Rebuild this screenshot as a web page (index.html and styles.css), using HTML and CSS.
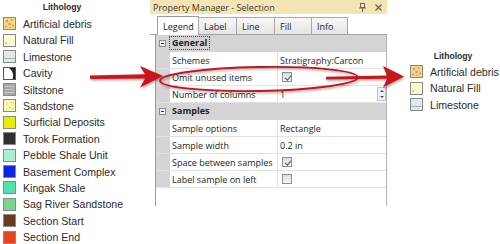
FILE: index.html
```html
<!DOCTYPE html>
<html lang="en">
<head>
    <meta charset="UTF-8">
    <title>Legend - Omit unused items</title>
    <link rel="stylesheet" href="styles.css">
</head>
<body>
    <div class="page">
        <!-- full legend -->
        <div class="legend legend-left">
            <div class="legend-title">Lithology</div>
            <ul class="legend-list">
                <li><span class="swatch sw-debris"><svg viewBox="0 0 11 11"><circle cx="3" cy="3" r="1.2"/><circle cx="7.5" cy="2" r="1"/><circle cx="5.5" cy="6" r="1.2"/><circle cx="9" cy="7.5" r="1"/><circle cx="2" cy="8.5" r="1"/><circle cx="6" cy="9.5" r="0.8"/></svg></span>Artificial debris</li>
                <li><span class="swatch sw-fill"><svg viewBox="0 0 11 11"><rect x="1.5" y="7.5" width="1.2" height="1.2"/></svg></span>Natural Fill</li>
                <li><span class="swatch sw-lime"><svg viewBox="0 0 11 11"><line x1="0" y1="7.5" x2="11" y2="7.5"/></svg></span>Limestone</li>
                <li><span class="swatch sw-cavity"><svg viewBox="0 0 11 11"><path d="M5 0 L11 0 L11 11 L8.5 11 C10 7 9 3 5 0Z"/></svg></span>Cavity</li>
                <li><span class="swatch sw-silt"><svg viewBox="0 0 11 11"><line x1="1" y1="2.5" x2="10" y2="2.5"/><line x1="1" y1="5.5" x2="10" y2="5.5"/><line x1="1" y1="8.5" x2="10" y2="8.5"/></svg></span>Siltstone</li>
                <li><span class="swatch sw-sand"><svg viewBox="0 0 11 11"><circle cx="3" cy="4" r="0.6"/><circle cx="7.5" cy="2.5" r="0.6"/><circle cx="6" cy="7.5" r="0.6"/><circle cx="2.5" cy="9" r="0.5"/><circle cx="9" cy="8.5" r="0.5"/></svg></span>Sandstone</li>
                <li><span class="swatch sw-surficial"></span>Surficial Deposits</li>
                <li><span class="swatch sw-torok"></span>Torok Formation</li>
                <li><span class="swatch sw-pebble"></span>Pebble Shale Unit</li>
                <li><span class="swatch sw-basement"></span>Basement Complex</li>
                <li><span class="swatch sw-kingak"></span>Kingak Shale</li>
                <li><span class="swatch sw-sag"></span>Sag River Sandstone</li>
                <li><span class="swatch sw-start"></span>Section Start</li>
                <li><span class="swatch sw-end"></span>Section End</li>
            </ul>
        </div>

        <!-- property manager window -->
        <div class="panel">
            <div class="panel-title">
                <span>Property Manager - Selection</span>
                <span class="panel-buttons">
                    <svg class="pin" viewBox="0 0 7 9"><rect x="1.5" y="0.5" width="4" height="4"/><line x1="0" y1="5" x2="7" y2="5"/><line x1="3.5" y1="5" x2="3.5" y2="9"/></svg>
                    <svg class="close" viewBox="0 0 7 7"><line x1="0.5" y1="0.5" x2="6.5" y2="6.5"/><line x1="6.5" y1="0.5" x2="0.5" y2="6.5"/></svg>
                </span>
            </div>
            <div class="tabs">
                <span class="tab active tab-legend">Legend</span>
                <span class="tab tab-label">Label</span>
                <span class="tab tab-line">Line</span>
                <span class="tab tab-fill">Fill</span>
                <span class="tab tab-info">Info</span>
            </div>
            <div class="grid">
                <div class="row cat">
                    <span class="gutter"><span class="toggle"></span></span>
                    <span class="cat-label focus">General</span>
                </div>
                <div class="row">
                    <span class="gutter"></span>
                    <span class="name">Schemes</span>
                    <span class="value">Stratigraphy:Carcon</span>
                </div>
                <div class="row">
                    <span class="gutter"></span>
                    <span class="name">Omit unused items</span>
                    <span class="value"><span class="check checked"></span></span>
                </div>
                <div class="row">
                    <span class="gutter"></span>
                    <span class="name">Number of columns</span>
                    <span class="value">1
                        <span class="spinner"><span class="spin-up"></span><span class="spin-down"></span></span>
                    </span>
                </div>
                <div class="row cat">
                    <span class="gutter"><span class="toggle"></span></span>
                    <span class="cat-label">Samples</span>
                </div>
                <div class="row">
                    <span class="gutter"></span>
                    <span class="name">Sample options</span>
                    <span class="value">Rectangle</span>
                </div>
                <div class="row">
                    <span class="gutter"></span>
                    <span class="name">Sample width</span>
                    <span class="value">0.2 in</span>
                </div>
                <div class="row">
                    <span class="gutter"></span>
                    <span class="name">Space between samples</span>
                    <span class="value"><span class="check checked"></span></span>
                </div>
                <div class="row">
                    <span class="gutter"></span>
                    <span class="name">Label sample on left</span>
                    <span class="value"><span class="check"></span></span>
                </div>
            </div>
        </div>

        <!-- reduced legend -->
        <div class="legend legend-right">
            <div class="legend-title">Lithology</div>
            <ul class="legend-list">
                <li><span class="swatch sw-debris"><svg viewBox="0 0 11 11"><circle cx="3" cy="3" r="1.2"/><circle cx="7.5" cy="2" r="1"/><circle cx="5.5" cy="6" r="1.2"/><circle cx="9" cy="7.5" r="1"/><circle cx="2" cy="8.5" r="1"/><circle cx="6" cy="9.5" r="0.8"/></svg></span>Artificial debris</li>
                <li><span class="swatch sw-fill"><svg viewBox="0 0 11 11"><rect x="1.5" y="7.5" width="1.2" height="1.2"/></svg></span>Natural Fill</li>
                <li><span class="swatch sw-lime"><svg viewBox="0 0 11 11"><line x1="0" y1="7.5" x2="11" y2="7.5"/></svg></span>Limestone</li>
            </ul>
        </div>

        <!-- red call-outs drawn over everything -->
        <svg class="annotations" viewBox="0 0 500 244">
            <defs>
                <filter id="shade" x="-10%" y="-30%" width="130%" height="180%">
                    <feDropShadow dx="1" dy="1.5" stdDeviation="1" flood-color="#000" flood-opacity="0.35"/>
                </filter>
            </defs>
            <g filter="url(#shade)">
                <ellipse cx="259" cy="79" rx="99" ry="12" transform="rotate(-1 259 79)" fill="none" stroke="#c4121c" stroke-width="1.8"/>
                <path d="M90 75.6 L145 74.3 L140 66 L163 76 L140 87.5 L145 78.6 L90 79 Z" fill="#c8141e"/>
                <path d="M326 76.8 L387 75.6 L383 66 L404 76.5 L383 87.5 L387 78.8 L326 79.6 Z" fill="#c8141e"/>
            </g>
        </svg>
    </div>
</body>
</html>
```

FILE: styles.css
```css
* {
    box-sizing: border-box;
}
body {
    margin: 0;
    background: #fff;
}
.page {
    position: relative;
    display: flex;
    width: 500px;
    height: 244px;
    overflow: hidden;
    font-family: "Liberation Sans", Arial, sans-serif;
    color: #2b2b2b;
}

/* legends */
.legend {
    flex: none;
}
.legend-left {
    width: 150px;
    padding-top: 2px;
}
.legend-right {
    flex: 1;
    padding: 51px 0 0 23px;
}
.legend-title {
    font-weight: bold;
    font-size: 8.6px;
    line-height: 10px;
    text-align: center;
}
.legend-left .legend-title {
    width: 124px;
}
.legend-right .legend-title {
    width: 86px;
}
.legend-list {
    list-style: none;
    margin: 3.8px 0 0;
    padding: 0;
}
.legend-right .legend-list {
    margin-top: 2.8px;
}
.legend-list li {
    display: flex;
    align-items: center;
    gap: 7px;
    height: 16.4px;
    padding-left: 3px;
    font-size: 10.6px;
    white-space: nowrap;
}
.legend-right .legend-list li {
    padding-left: 0;
}
.swatch {
    display: block;
    flex: none;
    width: 13px;
    height: 13px;
    border: 1px solid #8a8a8a;
}
.swatch svg {
    display: block;
    width: 11px;
    height: 11px;
}
.sw-debris { background: #f2dc76; }
.sw-debris circle { fill: #e07ac2; }
.sw-fill { background: #fdfbcc; }
.sw-fill rect { fill: #5a78d0; }
.sw-lime { background: #e2e8ea; }
.sw-lime line { stroke: #9fb6bc; stroke-width: 1; }
.sw-cavity { background: #fff; border-color: #555; }
.sw-cavity path { fill: #222; }
.sw-silt { background: #a7a7a7; }
.sw-silt line { stroke: #c8c8c8; stroke-width: 1; }
.sw-sand { background: #fbf7b4; }
.sw-sand circle { fill: #a89a48; }
.sw-surficial { background: #e2ef00; }
.sw-torok { background: #303030; }
.sw-pebble { background: #aeeed0; }
.sw-basement { background: #0b24e6; }
.sw-kingak { background: #4ee2b0; }
.sw-sag { background: #7fd391; }
.sw-start { background: #6c3b1d; }
.sw-end { background: #ea4322; }

/* property manager */
.panel {
    flex: none;
    display: flex;
    flex-direction: column;
    width: 237px;
    font-family: "Open Sans", sans-serif;
    font-size: 9px;
    color: #1e1e1e;
}
.panel-title {
    display: flex;
    align-items: center;
    justify-content: space-between;
    height: 14px;
    padding: 0 5px 0 3px;
    background: #f5e4b4;
    color: #3c3a33;
    white-space: nowrap;
}
.panel-buttons {
    display: flex;
    align-items: center;
    gap: 9px;
}
.pin {
    width: 7px;
    height: 9px;
}
.pin rect, .pin line {
    fill: none;
    stroke: #6d6450;
    stroke-width: 1;
}
.close {
    width: 7px;
    height: 7px;
}
.close line {
    stroke: #6d6450;
    stroke-width: 1.3;
}

.tabs {
    display: flex;
    align-items: flex-end;
    height: 21px;
    padding-left: 7px;
    border-bottom: 1px solid #a3a3a3;
}
.tab {
    display: flex;
    align-items: center;
    height: 17px;
    margin-right: -1px;
    padding-left: 5px;
    border: 1px solid #a8a8a8;
    border-bottom: none;
    background: linear-gradient(#f8f8f8, #e4e4e4);
}
.tab.active {
    height: 19px;
    margin-bottom: -1px;
    background: #fff;
    border-color: #9a9a9a;
}
.tab-legend { width: 42px; }
.tab-label { width: 39px; }
.tab-line { width: 39px; }
.tab-fill { width: 38px; }
.tab-info { width: 37px; }

.grid {
    height: 171px;
    margin-left: 5px;
    border-left: 1px solid #9c9c9c;
    border-right: 1px solid #b4b4b4;
}
.row {
    display: flex;
    align-items: center;
    height: 17px;
    border-bottom: 1px solid #e2e2e2;
    white-space: nowrap;
}
.row.cat {
    background: #d4d4d4;
    border-bottom-color: #d4d4d4;
    font-weight: bold;
}
.gutter {
    display: flex;
    align-items: center;
    align-self: stretch;
    width: 14px;
    flex: none;
    background: #d4d4d4;
}
.toggle {
    position: relative;
    width: 7px;
    height: 7px;
    margin-left: 3px;
    border: 1px solid #8c8c8c;
    background: #f6f6f6;
}
.toggle::after {
    content: "";
    position: absolute;
    left: 1px;
    top: 2px;
    width: 3px;
    height: 1px;
    background: #333;
}
.cat-label {
    padding: 0 2px;
    line-height: 12px;
}
.cat-label.focus {
    outline: 1px dotted #444;
}
.name {
    align-self: stretch;
    display: flex;
    align-items: center;
    width: 108px;
    flex: none;
    padding-left: 2px;
    border-right: 1px solid #e2e2e2;
}
.value {
    position: relative;
    align-self: stretch;
    display: flex;
    align-items: center;
    flex: 1;
    padding-left: 2px;
}
.check {
    display: block;
    width: 10px;
    height: 10px;
    margin-left: 2px;
    border: 1px solid #8f9090;
    background: linear-gradient(#dcdcdc, #f6f6f6);
}
.check.checked {
    background: linear-gradient(#dcdcdc, #f6f6f6);
    position: relative;
}
.check.checked::after {
    content: "";
    position: absolute;
    left: 2.5px;
    top: 0.5px;
    width: 2.5px;
    height: 5px;
    border: solid #3e4f8c;
    border-width: 0 1.4px 1.4px 0;
    transform: rotate(40deg);
}
.spinner {
    position: absolute;
    right: 0;
    top: 1px;
    display: flex;
    flex-direction: column;
    width: 9px;
    height: 14px;
    border: 1px solid #b9c3cf;
    background: #eef2f7;
}
.spin-up, .spin-down {
    flex: 1;
    position: relative;
}
.spin-up::after, .spin-down::after {
    content: "";
    position: absolute;
    left: 1.5px;
    border-left: 2px solid transparent;
    border-right: 2px solid transparent;
}
.spin-up::after {
    top: 2px;
    border-bottom: 2px solid #3a4a7a;
}
.spin-down::after {
    top: 2px;
    border-top: 2px solid #3a4a7a;
}

/* red call-outs */
.annotations {
    position: absolute;
    left: 0;
    top: 0;
    width: 500px;
    height: 244px;
    pointer-events: none;
}
```
